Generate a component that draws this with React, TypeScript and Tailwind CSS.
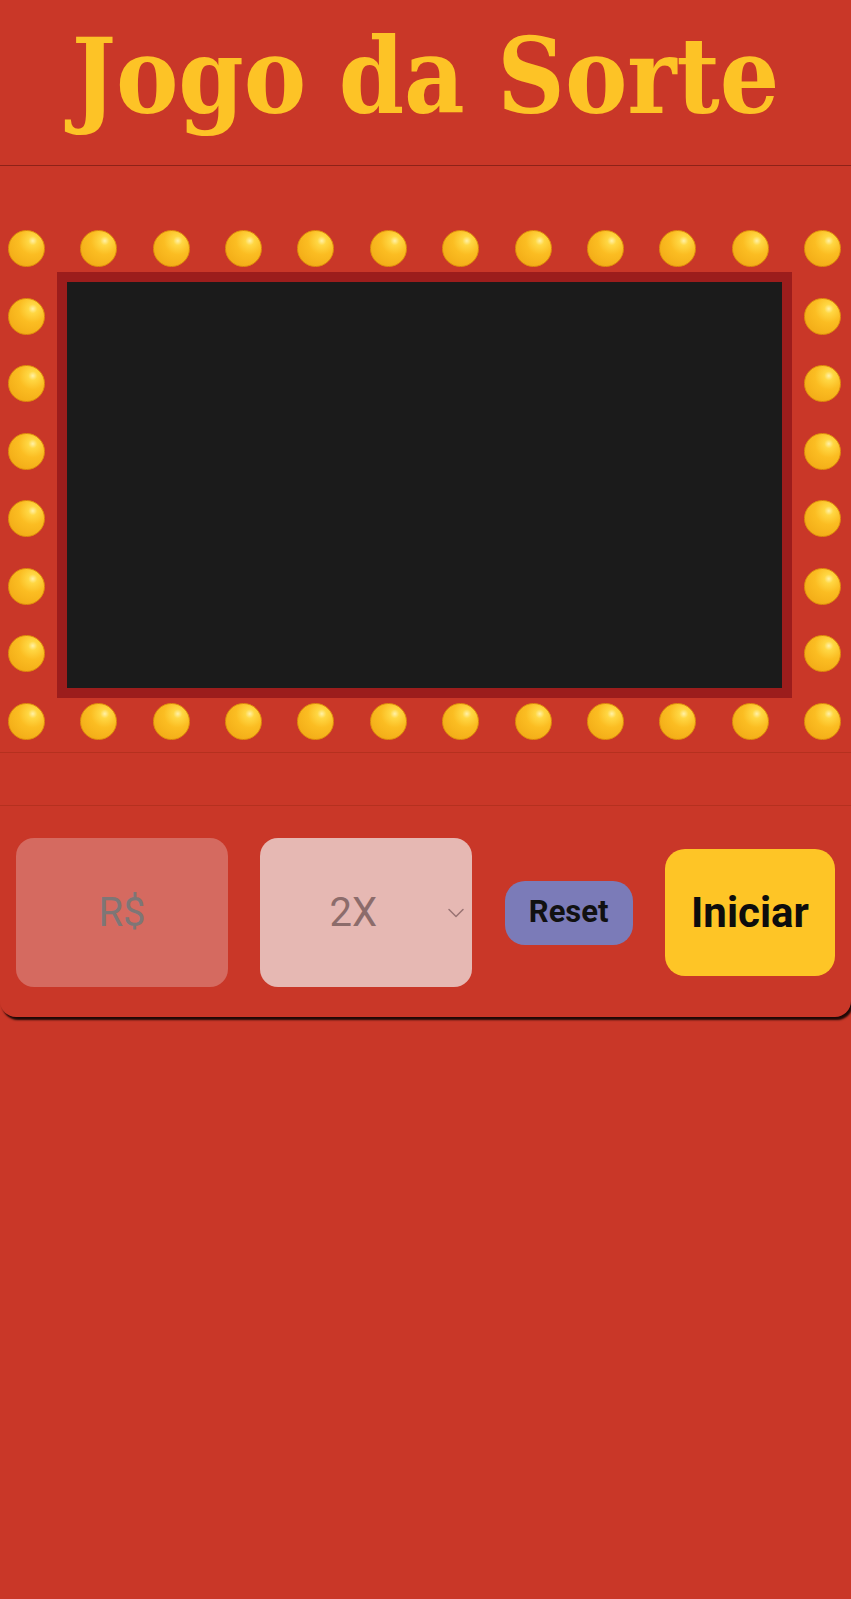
import { ChevronDown } from 'lucide-react';

// one glossy marquee bulb
function Bulb() {
  return (
    <div className="h-[37px] w-[37px] shrink-0 rounded-full border border-[#e0900c] bg-[radial-gradient(circle_at_68%_28%,#fff1a8_0%,#ffd743_13%,#fbbd22_40%,#efa512_100%)]" />
  );
}

const topRow = Array.from({ length: 12 });
const sideCol = Array.from({ length: 6 });

export default function App() {
  return (
    <div className="min-h-[1599px] bg-[#c93728] font-['Roboto',sans-serif]">
      {/* Header */}
      <header className="flex h-[166px] items-start justify-center border-b border-[#8e2218] bg-[#c93728] shadow-[0_3px_4px_rgba(0,0,0,0.35)]">
        <h1 className="mt-[20px] font-['DejaVu_Serif_Condensed','DejaVu_Serif',serif] text-[104px] leading-[1.1] font-bold text-[#fdc326]">
          Jogo da Sorte
        </h1>
      </header>

      {/* Game card */}
      <div className="rounded-b-2xl bg-[#c93728] shadow-[2px_3px_2px_rgba(0,0,0,0.85)]">
        {/* Marquee */}
        <div className="flex h-[586px] flex-col pt-[64px] pl-[8px] pr-[10px]">
          <div className="flex justify-between">
            {topRow.map((_, i) => (
              <Bulb key={i} />
            ))}
          </div>
          <div className="flex h-[436px]">
            <div className="flex flex-col justify-evenly">
              {sideCol.map((_, i) => (
                <Bulb key={i} />
              ))}
            </div>
            <div className="mx-[12px] my-[5px] flex-1 border-[10px] border-[#9c1d1c] bg-[#1b1b1b]" />
            <div className="flex flex-col justify-evenly">
              {sideCol.map((_, i) => (
                <Bulb key={i} />
              ))}
            </div>
          </div>
          <div className="flex justify-between">
            {topRow.map((_, i) => (
              <Bulb key={i} />
            ))}
          </div>
        </div>

        {/* Message strip */}
        <div className="h-[54px] border-y border-[#b5301f]" />

        {/* Controls */}
        <div className="flex items-center justify-between px-[16px] pt-[32px] pb-[30px]">
          <div className="flex h-[149px] w-[212px] items-center justify-center rounded-[18px] bg-[#d56a60] text-[40px] text-[#7e7676]">
            R$
          </div>
          <div className="relative flex h-[149px] w-[212px] items-center justify-center rounded-[18px] bg-[#e6b8b3] pr-[26px] text-[40px] text-[#8c6c6b]">
            2X
            <ChevronDown className="absolute right-[2px] top-1/2 -translate-y-1/2 text-[#9a7474]" size={28} strokeWidth={1.3} />
          </div>
          <button className="flex h-[64px] w-[128px] items-center justify-center rounded-[20px] bg-[#7b7bb8] text-[31px] font-bold text-[#111]">
            Reset
          </button>
          <button className="flex h-[127px] w-[170px] items-center justify-center rounded-[20px] bg-[#fec526] text-[42px] font-bold text-[#0d0d0d]">
            Iniciar
          </button>
        </div>
      </div>
    </div>
  );
}
